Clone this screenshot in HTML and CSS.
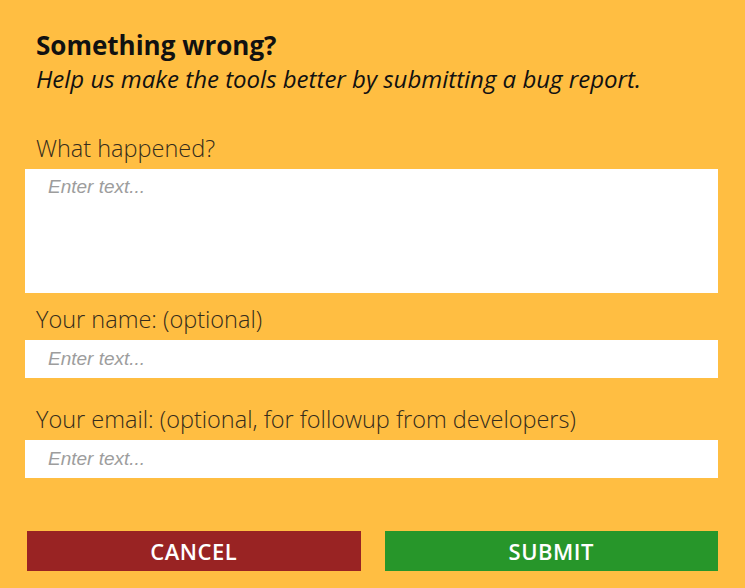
FILE: index.html
```html
<!DOCTYPE html>
<html>
<head>
  <title>Bug Report</title>
  <link rel="stylesheet" href="styles.css">
</head>
<body>
  <div class="report">
    <h2>Something wrong?</h2>
    <p class="intro">Help us make the tools better by submitting a bug report.</p>
    <form id="bugForm">
      <div class="form-group first">
        <label for="what">What happened?</label>
        <textarea id="what" name="what" placeholder="Enter text..."></textarea>
      </div>
      <div class="form-group">
        <label for="name">Your name: (optional)</label>
        <input type="text" id="name" name="name" placeholder="Enter text...">
      </div>
      <div class="form-group spaced">
        <label for="email">Your email: (optional, for followup from developers)</label>
        <input type="text" id="email" name="email" placeholder="Enter text...">
      </div>
      <div class="buttons">
        <button type="button" class="cancel">Cancel</button>
        <button type="submit" class="submit">Submit</button>
      </div>
    </form>
  </div>
</body>
</html>
```

FILE: styles.css
```css
body {
  margin: 0;
  background-color: #ffbe42;
  font-family: "Open Sans", sans-serif;
}
.report {
  padding: 29px 27px 0 25px;
}
h2 {
  margin: 0 0 0 11px;
  font-size: 26px;
  line-height: 32px;
  font-weight: bold;
  color: #111;
}
.intro {
  margin: 2px 0 0 11px;
  font-size: 24px;
  line-height: 32px;
  font-style: italic;
  color: #111;
}
.form-group {
  margin-top: 12px;
}
.form-group.first {
  margin-top: 39px;
}
.form-group.spaced {
  margin-top: 27px;
}
label {
  display: block;
  margin: 0 0 7px 11px;
  font-size: 23.5px;
  line-height: 28px;
  font-weight: 300;
  color: #352c1c;
}
input[type="text"],
textarea {
  display: block;
  width: 100%;
  border: none;
  margin: 0;
  padding: 7px 23px;
  box-sizing: border-box;
  background: #fff;
  font-family: "Liberation Sans", sans-serif;
  font-size: 19px;
  font-style: italic;
  color: #333;
  outline: none;
}
input[type="text"] {
  height: 38px;
}
textarea {
  height: 124px;
  resize: none;
}
::placeholder {
  color: #9d9d9d;
}
.buttons {
  display: flex;
  gap: 24px;
  margin: 53px 0 0 2px;
}
button {
  flex: 1;
  height: 40px;
  border: none;
  color: #fff;
  font-family: "Open Sans", sans-serif;
  font-size: 22px;
  font-weight: 600;
  text-transform: uppercase;
  letter-spacing: 0.5px;
  cursor: pointer;
}
.cancel {
  background-color: #992323;
}
.submit {
  background-color: #27962a;
}
```
